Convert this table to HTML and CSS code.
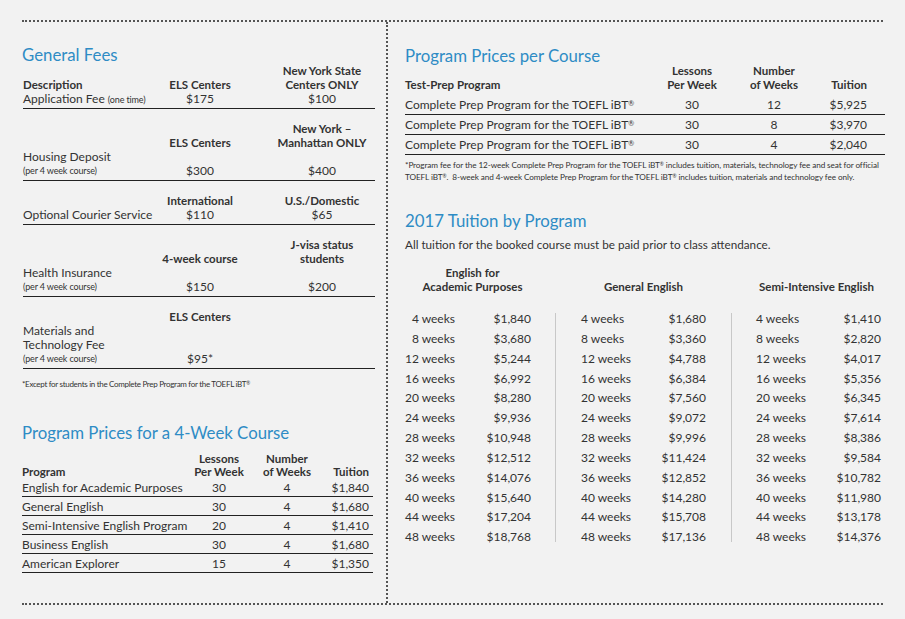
FILE: index.html
```html
<!DOCTYPE html>
<html lang="en">
<head>
<meta charset="utf-8">
<title>ELS Fees and Tuition</title>
<link rel="stylesheet" href="styles.css">
</head>
<body>
<div class="frame">
  <section class="col col-left">
    <h2 class="title">General Fees</h2>

    <div class="fees">
      <div class="fee-block first">
        <div class="cell c1"><b class="ln">Description</b><span class="ln">Application Fee <small class="sm">(one time)</small></span></div>
        <div class="cell c2"><b class="ln">ELS Centers</b><span class="ln">$175</span></div>
        <div class="cell c3"><b class="ln">New York State</b><b class="ln">Centers ONLY</b><span class="ln">$100</span></div>
      </div>

      <div class="fee-block">
        <div class="cell c1"><span class="ln">Housing Deposit</span><small class="ln sm">(per 4 week course)</small></div>
        <div class="cell c2"><b class="ln">ELS Centers</b><span class="ln"></span><span class="ln">$300</span></div>
        <div class="cell c3"><b class="ln">New York –</b><b class="ln">Manhattan ONLY</b><span class="ln"></span><span class="ln">$400</span></div>
      </div>

      <div class="fee-block">
        <div class="cell c1"><span class="ln">Optional Courier Service</span></div>
        <div class="cell c2"><b class="ln">International</b><span class="ln">$110</span></div>
        <div class="cell c3"><b class="ln">U.S./Domestic</b><span class="ln">$65</span></div>
      </div>

      <div class="fee-block">
        <div class="cell c1"><span class="ln">Health Insurance</span><small class="ln sm">(per 4 week course)</small></div>
        <div class="cell c2"><b class="ln">4-week course</b><span class="ln"></span><span class="ln">$150</span></div>
        <div class="cell c3"><b class="ln">J-visa status</b><b class="ln">students</b><span class="ln"></span><span class="ln">$200</span></div>
      </div>

      <div class="fee-block">
        <div class="cell c1"><span class="ln">Materials and</span><span class="ln">Technology Fee</span><small class="ln sm">(per 4 week course)</small></div>
        <div class="cell c2"><b class="ln">ELS Centers</b><span class="ln"></span><span class="ln"></span><span class="ln">$95*</span></div>
        <div class="cell c3"></div>
      </div>
    </div>

    <p class="note note-left">*Except for students in the Complete Prep Program for the TOEFL iBT<span class="reg">®</span></p>

    <h2 class="title title-4wk">Program Prices for a 4-Week Course</h2>

    <div class="ptable">
      <div class="prow phead">
        <b class="pc">Program</b>
        <b class="pc ctr">Lessons<br>Per Week</b>
        <b class="pc ctr">Number<br>of Weeks</b>
        <b class="pc rt">Tuition</b>
      </div>
      <div class="prow pfirst"><span>English for Academic Purposes</span><span class="ctr">30</span><span class="ctr">4</span><span class="rt">$1,840</span></div>
      <div class="prow"><span>General English</span><span class="ctr">30</span><span class="ctr">4</span><span class="rt">$1,680</span></div>
      <div class="prow"><span>Semi-Intensive English Program</span><span class="ctr">20</span><span class="ctr">4</span><span class="rt">$1,410</span></div>
      <div class="prow"><span>Business English</span><span class="ctr">30</span><span class="ctr">4</span><span class="rt">$1,680</span></div>
      <div class="prow"><span>American Explorer</span><span class="ctr">15</span><span class="ctr">4</span><span class="rt">$1,350</span></div>
    </div>
  </section>

  <section class="col col-right">
    <h2 class="title">Program Prices per Course</h2>

    <div class="ctable">
      <div class="crow chead">
        <b class="pc">Test-Prep Program</b>
        <b class="pc ctr">Lessons<br>Per Week</b>
        <b class="pc ctr">Number<br>of Weeks</b>
        <b class="pc rt">Tuition</b>
      </div>
      <div class="crow cfirst"><span>Complete Prep Program for the TOEFL iBT<span class="reg">®</span></span><span class="ctr">30</span><span class="ctr">12</span><span class="rt">$5,925</span></div>
      <div class="crow"><span>Complete Prep Program for the TOEFL iBT<span class="reg">®</span></span><span class="ctr">30</span><span class="ctr">8</span><span class="rt">$3,970</span></div>
      <div class="crow"><span>Complete Prep Program for the TOEFL iBT<span class="reg">®</span></span><span class="ctr">30</span><span class="ctr">4</span><span class="rt">$2,040</span></div>
    </div>

    <p class="note note-right">*Program fee for the 12-week Complete Prep Program for the TOEFL iBT<span class="reg">®</span> includes tuition, materials, technology fee and seat for official<br>TOEFL iBT<span class="reg">®</span>.&nbsp; 8-week and 4-week Complete Prep Program for the TOEFL iBT<span class="reg">®</span> includes tuition, materials and technology fee only.</p>

    <h2 class="title title-2017">2017 Tuition by Program</h2>
    <p class="lead">All tuition for the booked course must be paid prior to class attendance.</p>

    <div class="tuition">
      <div class="thead g1">English for<br>Academic Purposes</div>
      <div class="thead g2">General English</div>
      <div class="thead g3">Semi-Intensive English</div>

      <div class="tgroup g1">
        <span>4 weeks</span><span>$1,840</span>
        <span>8 weeks</span><span>$3,680</span>
        <span>12 weeks</span><span>$5,244</span>
        <span>16 weeks</span><span>$6,992</span>
        <span>20 weeks</span><span>$8,280</span>
        <span>24 weeks</span><span>$9,936</span>
        <span>28 weeks</span><span>$10,948</span>
        <span>32 weeks</span><span>$12,512</span>
        <span>36 weeks</span><span>$14,076</span>
        <span>40 weeks</span><span>$15,640</span>
        <span>44 weeks</span><span>$17,204</span>
        <span>48 weeks</span><span>$18,768</span>
      </div>
      <div class="tgroup g2">
        <span>4 weeks</span><span>$1,680</span>
        <span>8 weeks</span><span>$3,360</span>
        <span>12 weeks</span><span>$4,788</span>
        <span>16 weeks</span><span>$6,384</span>
        <span>20 weeks</span><span>$7,560</span>
        <span>24 weeks</span><span>$9,072</span>
        <span>28 weeks</span><span>$9,996</span>
        <span>32 weeks</span><span>$11,424</span>
        <span>36 weeks</span><span>$12,852</span>
        <span>40 weeks</span><span>$14,280</span>
        <span>44 weeks</span><span>$15,708</span>
        <span>48 weeks</span><span>$17,136</span>
      </div>
      <div class="tgroup g3">
        <span>4 weeks</span><span>$1,410</span>
        <span>8 weeks</span><span>$2,820</span>
        <span>12 weeks</span><span>$4,017</span>
        <span>16 weeks</span><span>$5,356</span>
        <span>20 weeks</span><span>$6,345</span>
        <span>24 weeks</span><span>$7,614</span>
        <span>28 weeks</span><span>$8,386</span>
        <span>32 weeks</span><span>$9,584</span>
        <span>36 weeks</span><span>$10,782</span>
        <span>40 weeks</span><span>$11,980</span>
        <span>44 weeks</span><span>$13,178</span>
        <span>48 weeks</span><span>$14,376</span>
      </div>
    </div>
  </section>
</div>
</body>
</html>
```
FILE: styles.css
```css
* { box-sizing: border-box; }

body {
  margin: 0;
  background: #f2f2f2;
  color: #333;
  font-family: Lato, "Open Sans", sans-serif;
  font-size: 12px;
}

b { font-weight: 700; font-size: 11.5px; }

.reg {
  font-size: 0.6em;
  line-height: 0;
  vertical-align: 0.45em;
}

.frame {
  margin: 20px 0 0 22px;
  width: 861px;
  height: 585px;
  border-top: 2px dotted #555;
  border-bottom: 2px dotted #555;
  display: grid;
  grid-template-columns: 366px 1fr;
}

.col-left {
  border-right: 2px dotted #555;
  padding-top: 23px;
}

.col-right {
  padding: 24px 0 0 17px;
}

.title {
  margin: 0;
  font-size: 16.8px;
  line-height: 20px;
  font-weight: 400;
  color: #2e8cc5;
}

/* General fees */
.fees { margin-left: 1px; width: 352px; }

.fee-block {
  display: grid;
  grid-template-columns: 127px 100px 1fr;
  align-items: end;
  padding: 13px 0 2px;
  border-bottom: 1px solid #222;
}

.fee-block.first { padding-top: 0; margin-top: -1px; }

.cell { display: flex; flex-direction: column; }
.c2 { text-align: center; }
.c3 { text-align: center; padding-left: 19px; }

.ln { display: block; line-height: 14px; height: 14px; white-space: nowrap; }

.sm { font-size: 9px; letter-spacing: -0.15px; }

.note {
  margin: 0;
  font-size: 8px;
  line-height: 12px;
  white-space: nowrap;
}

.note-left { margin-top: 9px; letter-spacing: -0.3px; }

.title-4wk { margin-top: 33px; }

/* left program table */
.ptable { width: 351px; margin-top: 10px; }

.prow {
  display: grid;
  grid-template-columns: 167px 60px 76px 44px;
  align-items: end;
  line-height: 14px;
  padding: 3px 0 1px;
  border-bottom: 1px solid #222;
  white-space: nowrap;
}

.prow.phead {
  border-bottom: 0;
  padding: 0;
  line-height: 12.5px;
}

.ctr { text-align: center; }
.rt { text-align: right; }

/* right course table */
.ctable { width: 480px; margin-top: -2px; }

.crow {
  display: grid;
  grid-template-columns: 247px 80px 84px 51px;
  align-items: end;
  line-height: 14px;
  padding: 3px 0 2px;
  border-bottom: 1px solid #222;
  white-space: nowrap;
}

.crow.chead { border-bottom: 0; padding: 0; }
.crow.cfirst { margin-top: 3px; }

.note-right { margin-top: 4px; font-size: 8.2px; letter-spacing: -0.1px; }

.title-2017 { margin-top: 28px; }

.lead {
  margin: 6px 0 0;
  font-size: 11.7px;
  line-height: 14px;
}

/* tuition */
.tuition {
  display: grid;
  grid-template-columns: 151px 176px 149px;
  margin-top: 15px;
}

.thead {
  font-weight: 700;
  font-size: 11.5px;
  line-height: 14px;
  text-align: center;
  align-self: end;
}

.thead.g1 { padding: 0 16px 0 0; }
.thead.g2 { padding: 0 26px 0 25px; }
.thead.g3 { padding: 0 4px 0 24px; }

.tgroup {
  display: grid;
  line-height: 19.85px;
  margin-top: 15px;
  white-space: nowrap;
}

.tgroup span:nth-child(even) { text-align: right; }

.tgroup.g1 {
  grid-template-columns: 50px 76px;
  padding-right: 25px;
  background: linear-gradient(#c8c8c8, #c8c8c8) right 0 top 4px / 1px calc(100% - 9px) no-repeat;
}

.tgroup.g1 span:nth-child(odd) { text-align: right; }

.tgroup.g2 {
  grid-template-columns: 1fr auto;
  padding: 0 26px 0 25px;
  background: linear-gradient(#c8c8c8, #c8c8c8) right 0 top 4px / 1px calc(100% - 9px) no-repeat;
}

.tgroup.g3 {
  grid-template-columns: 1fr auto;
  padding: 0 0 0 24px;
}
```
